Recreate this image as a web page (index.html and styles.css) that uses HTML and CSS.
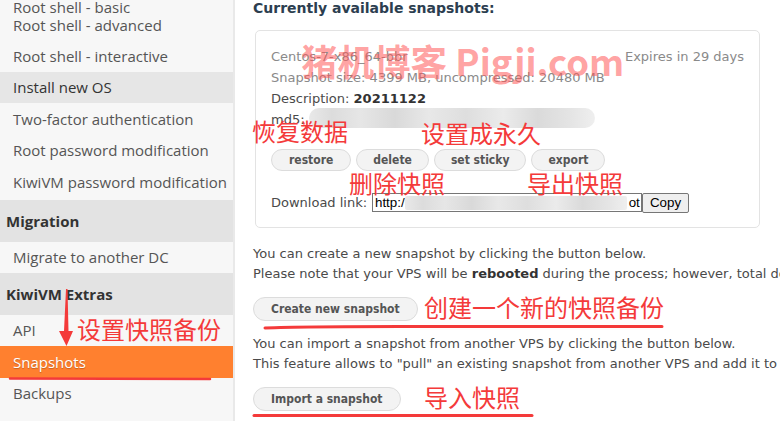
FILE: index.html
```html
<!DOCTYPE html>
<html>
<head>
<meta charset="utf-8">
<link rel="stylesheet" href="styles.css">
</head>
<body>
<aside class="sidebar">
  <div class="item item-multi"><span>Root shell - basic</span><span>Root shell - advanced</span></div>
  <div class="item">Root shell - interactive</div>
  <div class="item hover">Install new OS</div>
  <div class="item">Two-factor authentication</div>
  <div class="item">Root password modification</div>
  <div class="item">KiwiVM password modification</div>
  <div class="section first">Migration</div>
  <div class="item">Migrate to another DC</div>
  <div class="section">KiwiVM Extras</div>
  <div class="item">API</div>
  <div class="item current">Snapshots</div>
  <div class="item">Backups</div>
</aside>
<main class="main">
  <h2 class="title">Currently available snapshots:</h2>
  <div class="card">
    <div class="line muted row">
      <span>Centos-7-x86_64-bbr</span>
      <span>Expires in 29 days</span>
    </div>
    <div class="line muted">Snapshot size: 4399 MB, uncompressed: 20480 MB</div>
    <div class="line">Description: <b>20211122</b></div>
    <div class="line md5-line"><span>md5:</span><span class="blur md5"></span></div>
    <div class="buttons">
      <span class="pill">restore</span>
      <span class="pill">delete</span>
      <span class="pill">set sticky</span>
      <span class="pill">export</span>
    </div>
    <div class="download">
      <span class="dl-label">Download link:</span>
      <span class="fake-input"><span>http:/</span><span class="blur link"></span><span>ot</span></span><span class="copy">Copy</span>
    </div>
  </div>
  <p class="para">You can create a new snapshot by clicking the button below.<br>Please note that your VPS will be <b>rebooted</b> during the process; however, total downtime is usually within a few minutes.</p>
  <span class="pill big">Create new snapshot</span>
  <p class="para para-next">You can import a snapshot from another VPS by clicking the button below.<br>This feature allows to "pull" an existing snapshot from another VPS and add it to this VPS's list of snapshots.</p>
  <span class="pill big">Import a snapshot</span>
</main>

<div class="watermark">猪机博客 Pigji.com</div>
<div class="note n-restore">恢复数据</div>
<div class="note n-sticky">设置成永久</div>
<div class="note n-delete">删除快照</div>
<div class="note n-export">导出快照</div>
<div class="note n-create">创建一个新的快照备份</div>
<div class="note n-import">导入快照</div>
<div class="note n-snap">设置快照备份</div>
<svg class="mark" width="780" height="421" viewBox="0 0 780 421">
  <path d="M66 289 L67.5 289 L68.5 331 L73 331 L66.5 346 L59 331 L64 331 Z" fill="#f43a3a"/>
  <path d="M10 378.5 L210 379" stroke="#f43a3a" stroke-width="2.5" stroke-linecap="round" fill="none"/>
  <path d="M265 328 Q300 326.5 400 326.5 L662 326.5" stroke="#f43a3a" stroke-width="3" stroke-linecap="round" fill="none"/>
  <path d="M254 415.5 L532 415.5" stroke="#f43a3a" stroke-width="3" stroke-linecap="round" fill="none"/>
</svg>
</body>
</html>
```
FILE: styles.css
```css
* { box-sizing: border-box; }
html, body { margin: 0; padding: 0; }
body {
  width: 780px;
  height: 421px;
  overflow: hidden;
  position: relative;
  display: flex;
  align-items: stretch;
  background: #fff;
  font-family: "DejaVu Sans", Verdana, sans-serif;
}
.sidebar {
  width: 235px;
  flex: none;
  background: #f7f7f7;
  border-right: 2px solid #e9e9e9;
  font-family: "Open Sans", sans-serif;
  font-size: 15px;
  line-height: 18px;
  color: #555;
  margin-top: -2px;
}
.item { padding: 6.75px 13px 6.75px; white-space: nowrap; }
.item-multi { display: flex; flex-direction: column; padding: 0 13px 6px; }
.hover { background: #e6e6e6; color: #333; }
.section {
  background: #e3e3e3;
  color: #333;
  font-weight: bold;
  padding: 12px 6px 11.5px;
}
.section.first { margin-top: 2.5px; }
.current { background: #ff802f; color: #fff; text-shadow: 0 1px 1px rgba(0,0,0,0.25); }

.main {
  flex: 1;
  min-width: 0;
  padding-left: 18px;
  margin-top: -2px;
  white-space: nowrap;
  color: #4a4a4a;
  font-size: 13px;
}
.title {
  margin: 0;
  font-size: 14px;
  line-height: 20px;
  color: #2c3e50;
  font-weight: bold;
}
.card {
  margin: 12px 0 0 2px;
  width: 505px;
  border: 1px solid #e3e3e3;
  border-radius: 5px;
  padding: 15px 15px 15px;
}
.line { line-height: 21px; height: 21px; }
.row { display: flex; justify-content: space-between; }
.muted { color: #8a8a8a; }
.line b { color: #333; }
.md5-line { display: flex; align-items: center; }
.blur {
  display: inline-block;
  border-radius: 10px;
  background: linear-gradient(90deg, #e9e9e9 0%, #dcdcdc 8%, #e6e6e6 18%, #d9d9d9 30%, #e8e8e8 42%, #dedede 55%, #ebebeb 68%, #dadada 80%, #e5e5e5 92%, #efefef 100%);
  filter: blur(0.6px);
}
.md5 { flex: 1; margin: -4px 149px 0 4px; height: 20px; }
.buttons { display: flex; gap: 5px; margin-top: 19px; }
.pill {
  display: inline-flex;
  align-items: center;
  justify-content: center;
  height: 22px;
  padding: 0 16px;
  border: 1px solid #dcdcdc;
  border-radius: 11px;
  background: #f3f3f3;
  color: #555;
  font-family: "DejaVu Sans Condensed", "DejaVu Sans", sans-serif;
  font-weight: bold;
  font-size: 12px;
}
.pill:first-child { padding: 0 17px; }
.download {
  display: flex;
  align-items: center;
  margin-top: 22px;
  height: 19px;
}
.dl-label { flex: none; width: 101px; }
.fake-input {
  display: flex;
  align-items: center;
  flex: none;
  width: 270px;
  height: 19px;
  border: 1px solid #767676;
  padding: 0 1px 0 2px;
  font-family: "Liberation Sans", Arial, sans-serif;
  font-size: 13.33px;
  color: #000;
  overflow: hidden;
}
.link { width: 222px; height: 14px; border-radius: 2px; flex: none; margin-right: 2px; }
.copy {
  display: inline-flex;
  align-items: center;
  justify-content: center;
  flex: none;
  width: 47px;
  height: 20px;
  border: 1px solid #767676;
  border-radius: 2px;
  background: #efefef;
  font-family: "Liberation Sans", Arial, sans-serif;
  font-size: 13.33px;
  color: #000;
}
.para { margin: 16px 0 13px; line-height: 20px; }
.para-next { margin-top: 13px; }
.para b { color: #333; }
.big { display: flex; width: max-content; height: 24px; border-radius: 12px; padding: 0 17px; }

.watermark {
  position: absolute;
  left: 301px;
  top: 39px;
  font-family: "Noto Sans CJK SC", sans-serif;
  font-weight: bold;
  font-size: 36.5px;
  line-height: 1.2;
  color: rgba(255, 85, 85, 0.55);
  white-space: nowrap;
}
.note {
  position: absolute;
  font-family: "Noto Sans CJK SC", sans-serif;
  font-size: 24px;
  line-height: 26px;
  color: #f43a3a;
  white-space: nowrap;
}
.n-restore { left: 252px; top: 118px; }
.n-sticky { left: 421px; top: 120px; }
.n-delete { left: 349px; top: 170px; }
.n-export { left: 527px; top: 170px; }
.n-create { left: 424px; top: 294px; }
.n-import { left: 424px; top: 384px; }
.n-snap { left: 77px; top: 316px; }
.mark { position: absolute; left: 0; top: 0; pointer-events: none; }
```
